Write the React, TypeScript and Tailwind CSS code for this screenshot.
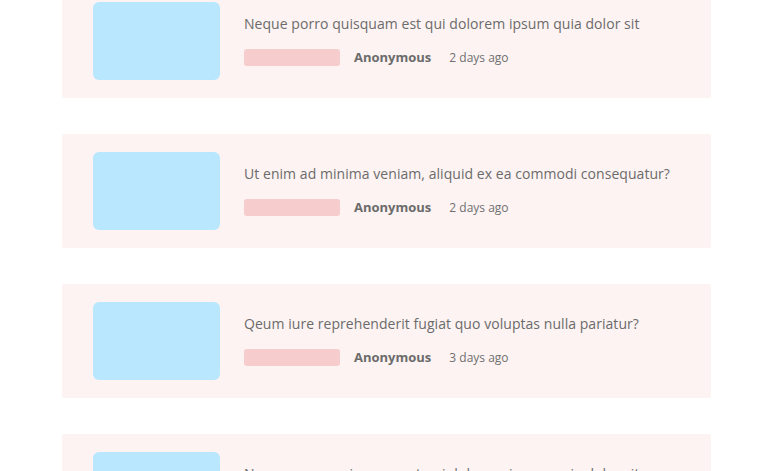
import React from 'react'

const posts = [
    { title: 'Neque porro quisquam est qui dolorem ipsum quia dolor sit', author: 'Anonymous', time: '2 days ago' },
    { title: 'Ut enim ad minima veniam, aliquid ex ea commodi consequatur?', author: 'Anonymous', time: '2 days ago' },
    { title: 'Qeum iure reprehenderit fugiat quo voluptas nulla pariatur?', author: 'Anonymous', time: '3 days ago' },
    { title: 'Neque porro quisquam est qui dolorem ipsum quia dolor sit', author: 'Anonymous', time: '4 days ago' },
]

function PostCard({ title, author, time }: { title: string; author: string; time: string }) {
    return (
        <div className="flex bg-[#fdf3f2] rounded-[2px] pt-[18px] pb-[18px] pl-[31px]">
            {/* thumbnail placeholder */}
            <div className="w-[127px] h-[78px] shrink-0 rounded-[6px] bg-[#b9e7fe]"></div>
            <div className="flex flex-col pl-[24px] pt-[13px]">
                <p className="text-[14px] leading-[18px] text-[#6b6b6b] tracking-[0.05px]">{title}</p>
                <div className="flex items-center mt-[15px]">
                    <div className="w-[96px] h-[17px] rounded-[3px] bg-[#f6cccc]"></div>
                    <span className="ml-[14px] text-[13px] font-bold text-[#6b6b6b]">{author}</span>
                    <span className="ml-[18px] text-[12px] text-[#707070]">{time}</span>
                </div>
            </div>
        </div>
    )
}

export default function App() {
    return (
        <section className="h-[471px] overflow-hidden bg-white" style={{ fontFamily: '"Open Sans", "DejaVu Sans", sans-serif' }}>
            <div className="w-[649px] ml-[62px] -mt-[16px] flex flex-col gap-[36px]">
                {posts.map((p, i) => (
                    <PostCard key={i} {...p} />
                ))}
            </div>
        </section>
    )
}
